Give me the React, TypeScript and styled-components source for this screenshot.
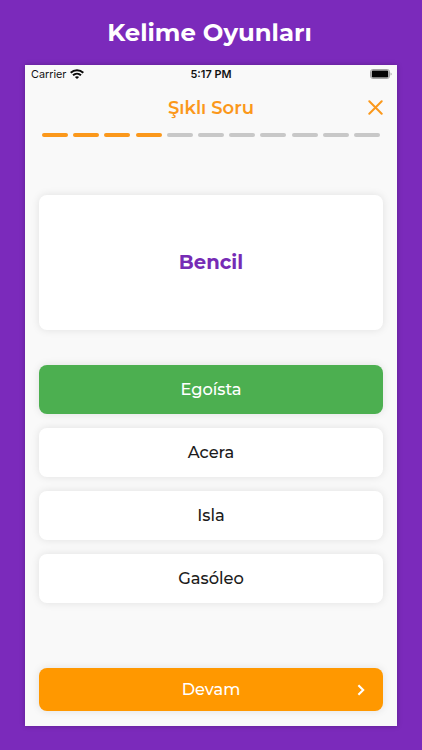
import React from "react";
import styled, { createGlobalStyle } from "styled-components";

const GlobalStyle = createGlobalStyle`
  * { box-sizing: border-box; }
  body { margin: 0; background: #7b2abb; }
`;

const Page = styled.main`
  display: flex;
  flex-direction: column;
  align-items: center;
  width: 422px;
  height: 750px;
  overflow: hidden;
  background: #7b2abb;
  font-family: Montserrat, Inter, sans-serif;
`;

const Headline = styled.h1`
  display: flex;
  align-items: center;
  height: 64.5px;
  margin: 0;
  padding: 0 3px 1px 0;
  color: #fff;
  font-size: 24.4px;
  font-weight: 700;
`;

const Screen = styled.section`
  display: flex;
  flex-direction: column;
  width: 372px;
  height: 661px;
  padding: 0 14px 14.5px;
  background: #f9f9f9;
  box-shadow: 0 0 5px rgba(0, 0, 0, 0.25);
`;

const StatusBar = styled.div`
  display: grid;
  grid-template-columns: 1fr auto 1fr;
  align-items: center;
  height: 19px;
  margin: 0 -8px;
  color: #111;
  font: 400 10.8px Inter, sans-serif;
`;

const Carrier = styled.div`
  display: flex;
  align-items: center;
  gap: 4px;

  svg { margin-bottom: 1px; }
`;

const Clock = styled.div`
  font-size: 10.9px;
  font-weight: 600;
`;

const Power = styled.div`
  display: flex;
  justify-content: flex-end;
  margin: 0 -1px 1px 0;
`;

const TitleBar = styled.header`
  display: grid;
  grid-template-columns: 1fr auto 1fr;
  align-items: center;
  height: 48px;
  color: #fb981b;
`;

const Title = styled.h2`
  grid-column: 2;
  margin: 0;
  font-size: 18px;
  font-weight: 600;
`;

const CloseButton = styled.button`
  display: flex;
  justify-self: end;
  padding: 0;
  border: 0;
  background: none;
  color: inherit;
`;

const Progress = styled.div`
  display: grid;
  grid-template-columns: repeat(11, 1fr);
  gap: 5.2px;
  margin: 1px 3px 0;
`;

const Step = styled.i<{ $done: boolean }>`
  height: 4px;
  border-radius: 2px;
  background: ${(p) => (p.$done ? "#fb981b" : "#c8c8c8")};
`;

const Card = styled.div`
  display: flex;
  align-items: center;
  justify-content: center;
  border-radius: 8px;
  background: #fff;
  box-shadow: 0 0 8px rgba(0, 0, 0, 0.1);
`;

const Question = styled(Card)`
  height: 135px;
  margin-top: 58px;
  color: #762bb5;
  font-size: 19.6px;
  font-weight: 700;
`;

const Options = styled.div`
  display: grid;
  gap: 14.4px;
  margin-top: 35.9px;
`;

const Option = styled(Card)<{ $correct?: boolean }>`
  height: 48.5px;
  padding-bottom: 1px;
  background: ${(p) => (p.$correct ? "#4caf50" : "#fff")};
  color: ${(p) => (p.$correct ? "#fff" : "#1c1c1c")};
  font-size: 16.3px;
  font-weight: 500;
`;

const ContinueButton = styled.button`
  display: grid;
  grid-template-columns: 1fr auto 1fr;
  align-items: center;
  height: 43px;
  margin-top: auto;
  padding: 0 18px;
  border: 0;
  border-radius: 8px;
  background: #ff9800;
  box-shadow: 0 0 8px rgba(0, 0, 0, 0.1);
  color: #fff;
  font: 500 16.2px Montserrat, Inter, sans-serif;

  span { grid-column: 2; padding-bottom: 2px; }
  svg { justify-self: end; }
`;

const WifiIcon = () => (
  <svg width="14" height="10" viewBox="0 0 14 10" fill="none" stroke="#0a0a0a" strokeWidth="2">
    <path d="M.7 3.7C4.3.3 9.7.3 13.3 3.7" />
    <path d="M3 6.3c2.3-2.1 5.7-2.1 8 0" />
    <path d="M7 10 4.9 7.9c1.2-1 3-1 4.2 0Z" fill="#0a0a0a" stroke="none" />
  </svg>
);

const BatteryIcon = () => (
  <svg width="22" height="10" viewBox="0 0 22 10">
    <rect x=".5" y=".5" width="19" height="9" rx="2.4" fill="none" stroke="#a5a5a5" />
    <rect x="1.7" y="1.6" width="16.6" height="6.8" rx="1.2" fill="#050505" />
    <path d="M20.7 3.4c1.1.5 1.1 2.7 0 3.2Z" fill="#888" />
  </svg>
);

const CloseIcon = () => (
  <svg width="15" height="15" viewBox="0 0 15 15" fill="none" stroke="currentColor" strokeWidth="2" strokeLinecap="round">
    <path d="m1.3 1.3 12.4 12.4M13.7 1.3 1.3 13.7" />
  </svg>
);

const ChevronIcon = () => (
  <svg width="8" height="12" viewBox="0 0 8 12" fill="none" stroke="#fff" strokeWidth="2.1">
    <path d="m1.4 1.2 4.8 4.8-4.8 4.8" />
  </svg>
);

const options = [
  { text: "Egoísta", correct: true },
  { text: "Acera" },
  { text: "Isla" },
  { text: "Gasóleo" },
];

export default function App() {
  return (
    <Page>
      <GlobalStyle />
      <Headline>Kelime Oyunları</Headline>
      <Screen>
        <StatusBar>
          <Carrier>Carrier <WifiIcon /></Carrier>
          <Clock>5:17 PM</Clock>
          <Power><BatteryIcon /></Power>
        </StatusBar>
        <TitleBar>
          <Title>Şıklı Soru</Title>
          <CloseButton aria-label="Kapat"><CloseIcon /></CloseButton>
        </TitleBar>
        <Progress>
          {Array.from({ length: 11 }, (_, i) => <Step key={i} $done={i < 4} />)}
        </Progress>
        <Question>Bencil</Question>
        <Options>
          {options.map((o) => (
            <Option key={o.text} $correct={o.correct}>{o.text}</Option>
          ))}
        </Options>
        <ContinueButton>
          <span>Devam</span>
          <ChevronIcon />
        </ContinueButton>
      </Screen>
    </Page>
  );
}
